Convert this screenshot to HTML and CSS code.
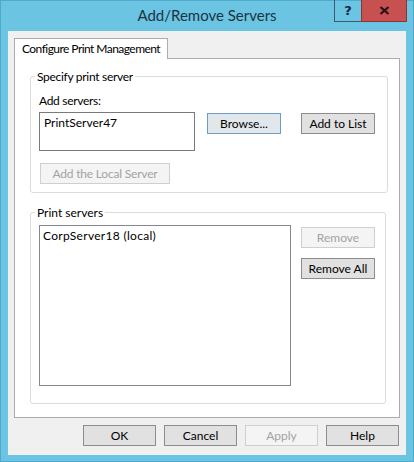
FILE: index.html
```html
<!DOCTYPE html>
<html>
<head>
<meta charset="utf-8">
<link rel="stylesheet" href="styles.css">
</head>
<body>
<div class="window">
  <div class="titlebar">
    <div class="spacer"></div>
    <div class="title">Add/Remove Servers</div>
    <div class="caption">
      <div class="cap help">?</div>
      <div class="cap close">
        <svg width="11" height="9" viewBox="0 0 11 9"><path d="M1.5 1 L9.5 8 M9.5 1 L1.5 8" stroke="#2b1212" stroke-width="2.3" stroke-linecap="butt" fill="none"/></svg>
      </div>
    </div>
  </div>
  <div class="client">
    <div class="tabs"><div class="tab">Configure Print Management</div></div>
    <div class="panel">
      <fieldset class="group g1">
        <legend>Specify print server</legend>
        <div class="label">Add servers:</div>
        <div class="row">
          <div class="textbox">PrintServer47</div>
          <div class="btn default browse">Browse...</div>
          <div class="btn addlist">Add to List</div>
        </div>
        <div class="btn disabled addlocal">Add the Local Server</div>
      </fieldset>
      <fieldset class="group g2">
        <legend>Print servers</legend>
        <div class="row2">
          <div class="listbox"><div class="item">CorpServer18 (local)</div></div>
          <div class="side">
            <div class="btn disabled">Remove</div>
            <div class="btn removeall">Remove All</div>
          </div>
        </div>
      </fieldset>
    </div>
    <div class="footer">
      <div class="btn">OK</div>
      <div class="btn">Cancel</div>
      <div class="btn disabled">Apply</div>
      <div class="btn">Help</div>
    </div>
  </div>
</div>
</body>
</html>
```
FILE: styles.css
```css
* { box-sizing: border-box; }
html, body { margin: 0; padding: 0; background: #6ac4e2; }
body { font-family: "Lato", "Noto Sans", sans-serif; font-size: 12px; color: #000; }

.window {
  width: 414px;
  height: 462px;
  background: #6ac4e2;
  border: 1px solid #4fa9cc;
  padding: 0 7px 6px 7px;
  display: flex;
  flex-direction: column;
}

.titlebar {
  height: 30px;
  display: grid;
  grid-template-columns: 1fr auto 1fr;
  align-items: start;
}
.title {
  font-size: 15px;
  line-height: 31px;
  color: #1b3442;
  margin-top: -1px;
  white-space: nowrap;
}
.caption {
  justify-self: end;
  display: flex;
  margin-right: -1px;
  margin-top: -1px;
}
.cap {
  height: 22px;
  display: flex;
  align-items: center;
  justify-content: center;
}
.help {
  width: 27px;
  border: 1px solid #3e5a6c;
  border-top: 0;
  border-right: 0;
  font-weight: bold;
  font-size: 13px;
  color: #14244a;
  font-family: "DejaVu Sans", sans-serif;
}
.close {
  width: 46px;
  background: #c75050;
  border: 1px solid #8c3434;
  border-top: 0;
}

.client {
  flex: 1;
  background: #f0f0f0;
  padding: 7px 7px 9px 6px;
  display: flex;
  flex-direction: column;
}

.tabs { display: flex; }
.tab {
  position: relative;
  z-index: 1;
  height: 21px;
  margin-bottom: -1px;
  padding: 0 7px 0 7px;
  white-space: nowrap;
  letter-spacing: -0.55px;
  background: #fff;
  border: 1px solid #acacac;
  border-bottom: 0;
  line-height: 19px;
}

.panel {
  height: 360px;
  background: #fff;
  border: 1px solid #acacac;
  margin-right: -1px;
  padding: 0 0 0 15px;
}

.group {
  margin: 0;
  border: 1px solid #dcdcdc;
  border-radius: 3px;
  padding: 9px 0 8px 8px;
  min-width: 0;
}
.group legend {
  padding: 0 2px;
  margin-left: -4px;
  line-height: 15px;
}
.g1 legend { letter-spacing: -0.3px; }
.g1 { width: 358px; margin-top: 10px; }
.g2 { width: 356px; margin-top: 12px; padding-top: 5px; padding-bottom: 17px; }

.label { line-height: 16px; letter-spacing: -0.3px; }
.row {
  display: flex;
  align-items: flex-start;
  margin-top: 3px;
}
.textbox {
  width: 156px;
  height: 39px;
  border: 1px solid #7a7a7a;
  padding: 2px 4px;
  line-height: 16px;
}
.btn {
  width: 74px;
  height: 21px;
  background: #e1e1e1;
  border: 1px solid #8d8d8d;
  display: flex;
  align-items: center;
  justify-content: center;
  line-height: 16px;
  white-space: nowrap;
}
.btn.disabled {
  background: #f4f4f4;
  border-color: #cfcfcf;
  color: #a3a3a3;
}
.btn.default {
  background: #e2e7ec;
  border-color: #6e9dc4;
}
.browse { margin-top: 1px; margin-left: 12px; }
.addlist { margin-top: 1px; margin-left: 20px; }
.addlocal { width: 130px; margin-top: 12px; margin-left: 1px; letter-spacing: -0.2px; }

.row2 { display: flex; align-items: flex-start; }
.listbox {
  width: 252px;
  height: 161px;
  border: 1px solid #828790;
  padding: 2px 3px;
}
.item { line-height: 16px; letter-spacing: 0.3px; }
.side {
  margin-left: 10px;
  margin-top: 2px;
  display: flex;
  flex-direction: column;
  gap: 10px;
}

.footer {
  margin-top: 7px;
  display: flex;
  justify-content: flex-end;
  gap: 8px;
  padding-right: 0;
}
.footer .btn { width: 73px; }
```
